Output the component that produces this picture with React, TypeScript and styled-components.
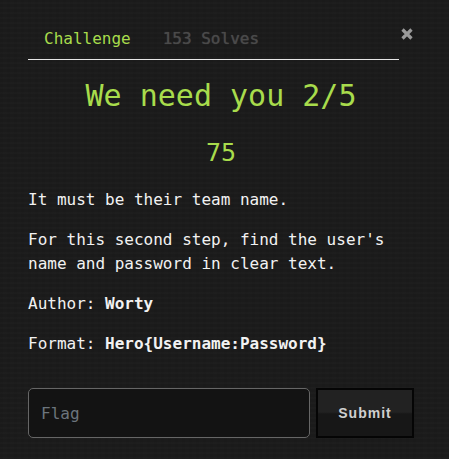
import styled, { createGlobalStyle } from "styled-components";

const GlobalStyle = createGlobalStyle`
  html, body {
    margin: 0;
    padding: 0;
    background-color: #1b1b1b;
    background-image:
      repeating-linear-gradient(0deg, rgba(255,255,255,0.012) 0px, rgba(255,255,255,0.012) 2px, transparent 2px, transparent 5px),
      repeating-linear-gradient(90deg, rgba(0,0,0,0.05) 0px, rgba(0,0,0,0.05) 3px, transparent 3px, transparent 7px);
    min-height: 459px;
  }
  * {
    box-sizing: border-box;
  }
`;

const Modal = styled.div`
  padding: 19px 35px 0 28px;
  font-family: "DejaVu Sans Mono", monospace;
  color: #f2f2f2;
`;

const Header = styled.div`
  display: flex;
  align-items: flex-start;
`;

const Tabs = styled.nav`
  flex: 1;
  display: flex;
  border-bottom: 1px solid #e6e6e6;
`;

const Tab = styled.span<{ $active?: boolean }>`
  padding: 8px 16px;
  font-size: 16px;
  line-height: 24px;
  color: ${(p) => (p.$active ? "#a8dc4c" : "#4a4a4a")};
  text-shadow: ${(p) => (p.$active ? "none" : "0 0 1px #4a4a4a")};
`;

const Close = styled.button`
  width: 15px;
  height: 24px;
  margin-top: 9px;
  padding: 0 0 0 1px;
  border: none;
  background: none;
  display: flex;
  align-items: flex-start;
  justify-content: center;
  svg {
    display: block;
  }
`;

const Title = styled.h2`
  margin: 18px 0 0;
  text-align: center;
  font-size: 30px;
  line-height: 36px;
  font-weight: 400;
  color: #a8dc4c;
`;

const Points = styled.h4`
  margin: 24px 0 0;
  text-align: center;
  font-size: 25px;
  line-height: 30px;
  font-weight: 400;
  color: #a8dc4c;
`;

const Description = styled.div`
  margin-top: 20px;
  font-size: 16px;
  line-height: 24px;
  p {
    margin: 0 0 16px;
  }
  b {
    font-weight: 700;
  }
`;

const FlagRow = styled.form`
  display: flex;
  gap: 6px;
  margin-top: 32px;
`;

const FlagInput = styled.input`
  flex: 1;
  min-width: 0;
  height: 50px;
  padding: 0 12px;
  background: #131313;
  border: 1px solid #666;
  border-radius: 5px;
  font-family: "DejaVu Sans Mono", monospace;
  font-size: 16px;
  color: #ddd;
  outline: none;
  &::placeholder {
    color: #6c757d;
  }
`;

const SubmitButton = styled.button`
  width: 98px;
  height: 50px;
  border: 2px solid #050505;
  background: linear-gradient(to bottom, #222 0%, #222 48%, #171717 52%, #171717 100%);
  color: #cfcfcf;
  font-family: "Liberation Sans", Arial, sans-serif;
  font-weight: 700;
  font-size: 14px;
  letter-spacing: 1px;
`;

export default function App() {
  return (
    <>
      <GlobalStyle />
      <Modal>
        <Header>
          <Tabs>
            <Tab $active>Challenge</Tab>
            <Tab>153 Solves</Tab>
          </Tabs>
          <Close aria-label="Close">
            <svg width="12" height="12" viewBox="0 0 12 12">
              <path d="M1.5 1.5 L10.5 10.5 M10.5 1.5 L1.5 10.5" stroke="#9a9a9a" strokeWidth="3.2" />
            </svg>
          </Close>
        </Header>
        <Title>We need you 2/5</Title>
        <Points>75</Points>
        <Description>
          <p>It must be their team name.</p>
          <p>For this second step, find the user's name and password in clear text.</p>
          <p>
            Author: <b>Worty</b>
          </p>
          <p>
            Format: <b>Hero{"{Username:Password}"}</b>
          </p>
        </Description>
        <FlagRow onSubmit={(e) => e.preventDefault()}>
          <FlagInput placeholder="Flag" />
          <SubmitButton type="submit">Submit</SubmitButton>
        </FlagRow>
      </Modal>
    </>
  );
}
